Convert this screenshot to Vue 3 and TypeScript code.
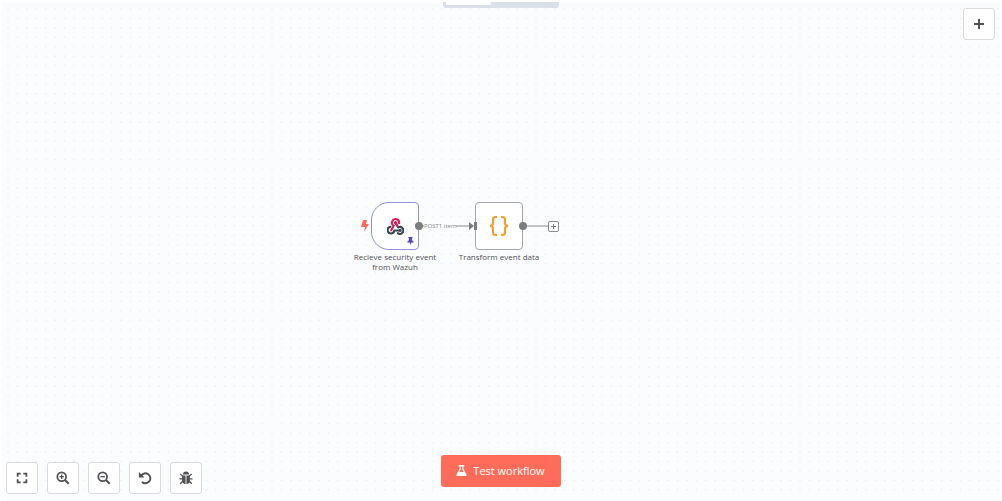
<script setup lang="ts">
interface Tool {
  name: string
  icon: 'fit' | 'in' | 'out' | 'reset' | 'debug'
}

const tools: Tool[] = [
  { name: 'Zoom to fit', icon: 'fit' },
  { name: 'Zoom in', icon: 'in' },
  { name: 'Zoom out', icon: 'out' },
  { name: 'Reset zoom', icon: 'reset' },
  { name: 'Report bug', icon: 'debug' },
]

// Seven by seven dots in each tile of the canvas grid
const steps = [0, 1, 2, 3, 4, 5, 6]
const tile = 66
const dots = steps.flatMap((r) =>
  steps.map((c) => ({ x: 8 + (c * tile) / 7, y: 9 + (r * tile) / 7 })),
)
</script>

<template>
  <main class="editor">
    <svg class="grid" aria-hidden="true">
      <defs>
        <pattern id="dots" :width="tile" :height="tile" patternUnits="userSpaceOnUse">
          <circle v-for="(d, i) in dots" :key="i" :cx="d.x" :cy="d.y" r="0.8" fill="#eaecf0" />
        </pattern>
      </defs>
      <rect width="100%" height="100%" fill="url(#dots)" />
    </svg>

    <div class="tabs"><span class="tab"></span></div>

    <button class="square add" type="button" aria-label="Add node">
      <svg viewBox="0 0 16 16"><path d="M8 3v10M3 8h10" stroke="currentColor" stroke-width="2" /></svg>
    </button>

    <svg class="wires" viewBox="0 0 210 60" aria-hidden="true">
      <path d="M59 30H111M163 30H189" stroke="#8b8c90" stroke-width="1" />
      <path d="M109 26l5 4-5 4z" fill="#7b7c80" />
    </svg>

    <svg class="bolt" viewBox="0 0 8 12" aria-hidden="true">
      <path d="M2 0h4L5 4h3L3 12l1-5H0z" fill="#ff6d5a" />
    </svg>

    <section class="node trigger">
      <div class="box">
        <svg class="webhook" viewBox="0 0 18 18" fill="none" stroke-width="2.200" stroke-linecap="round">
          <path d="M3.600 9.300A3.600 3.600 0 1 0 7.800 13.200H13.500" stroke="#37474f" />
          <path d="M9 5l3 5A3.600 3.600 0 1 1 11.500 16" stroke="#37474f" />
          <path d="M12.800 5.500A3.800 3.800 0 1 0 7 8.200L4.500 13M9 5l2 3.500" stroke="#e0195f" />
          <circle cx="9" cy="5" r="0.600" stroke="#e0195f" />
          <circle cx="14" cy="13.200" r="0.600" stroke="#37474f" />
        </svg>
        <svg class="pin" viewBox="0 0 8 10"><path d="M1 0h6v1H6v3l2 2v1H5L4 10 3 7H0V6l2-2V1H1z" fill="#5146c8" /></svg>
      </div>
      <span class="port out"></span>
      <p class="label">Recieve security event from Wazuh</p>
    </section>

    <span class="edge-label">POST1 item</span>

    <section class="node code">
      <div class="box">
        <svg class="braces" viewBox="0 0 20 20" fill="none" stroke="#ff9922" stroke-width="2">
          <path d="M8 1H6.500Q4 1 4 3.500V7Q4 10 1 10Q4 10 4 13V16.500Q4 19 6.500 19H8M12 1H13.500Q16 1 16 3.500V7Q16 10 19 10Q16 10 16 13V16.500Q16 19 13.500 19H12" />
        </svg>
      </div>
      <span class="port in"></span>
      <span class="port out"></span>
      <p class="label">Transform event data</p>
    </section>

    <button class="plus" type="button" aria-label="Add next node">
      <svg viewBox="0 0 9 9"><path d="M4.500 2v5M2 4.500h5" stroke="#77787c" /></svg>
    </button>

    <nav class="tools" aria-label="Canvas controls">
      <button v-for="t in tools" :key="t.name" class="square" type="button" :aria-label="t.name">
        <svg viewBox="0 0 16 16" fill="none" stroke="currentColor" stroke-width="2">
          <path v-if="t.icon === 'fit'" d="M3 6.500V3h3.500M9.500 3H13v3.500M13 9.500V13H9.500M6.500 13H3V9.500" />
          <template v-else-if="t.icon === 'in' || t.icon === 'out'">
            <circle cx="6.500" cy="6.500" r="5" />
            <path d="M10.500 10.500l4 4" stroke-width="2.500" />
            <path d="M4 6.500h5" stroke-width="1.500" />
            <path v-if="t.icon === 'in'" d="M6.500 4v5" stroke-width="1.500" />
          </template>
          <template v-else-if="t.icon === 'reset'">
            <path d="M3.500 5.500A5.700 5.700 0 1 1 4.500 12.500" stroke-width="2.200" />
            <path d="M1 1v6.500h6.500z" fill="currentColor" stroke="none" />
          </template>
          <template v-else>
            <path d="M4.500 4a3.500 3.500 0 0 1 7 0zM3.500 5h4v10Q3.500 14.500 3.500 10.500zM12.500 5h-4v10Q12.500 14.500 12.500 10.500z" fill="currentColor" stroke="none" />
            <path d="M1.500 3.500l3 2.500M14.500 3.500l-3 2.500M.5 9h4M15.500 9h-4M1.500 14.500l3-3M14.500 14.500l-3-3" stroke-width="1.500" />
          </template>
        </svg>
      </button>
    </nav>

    <button class="run" type="button">
      <svg viewBox="0 0 12 12" aria-hidden="true">
        <path d="M3 0h6v1.500H8V4l3.500 6.500Q12 12 10.500 12h-9Q0 12 .5 10.500L4 4V1.500H3zM5.200 1.500v3L3.700 7.500h4.600L6.800 4.500v-3z" fill="#fff" fill-rule="evenodd" />
      </svg>
      Test workflow
    </button>
  </main>
</template>

<style>
body {
  margin: 0;
  background: #fff;
}
</style>

<style scoped>
.editor {
  position: relative;
  box-sizing: border-box;
  height: 100vh;
  overflow: hidden;
  border: solid #fff;
  border-width: 2px 1px 0 2px;
  background: #fbfcfe;
  background-clip: padding-box;
  font-family: "Open Sans", "Noto Sans", sans-serif;
  color: #525356;
}
button {
  display: flex;
  align-items: center;
  justify-content: center;
  box-sizing: border-box;
  margin: 0;
  padding: 0;
  font: inherit;
  cursor: pointer;
}
svg {
  display: block;
}
.grid {
  position: absolute;
  top: -2px;
  left: -2px;
  width: 100%;
  height: 100%;
}
.tabs {
  position: absolute;
  top: 0;
  left: 50%;
  box-sizing: border-box;
  width: 116px;
  height: 6px;
  margin-left: -59px;
  padding: 0 3px 3px;
  border-radius: 0 0 3px 3px;
  background: #dadfe9;
}
.tab {
  display: block;
  width: 45px;
  height: 3px;
  border-radius: 0 0 2px 2px;
  background: #fff;
}
.square {
  width: 32px;
  height: 32px;
  border: 1px solid #d9dbe1;
  border-radius: 3px;
  background: #fff;
  color: #525356;
}
.square svg {
  width: 14px;
  height: 14px;
}
.add {
  position: absolute;
  top: 6px;
  right: 6px;
}
.add svg {
  width: 16px;
  height: 16px;
}
.tools {
  position: absolute;
  bottom: 7px;
  left: 4px;
  display: flex;
  gap: 9px;
}
.run {
  position: absolute;
  bottom: 14px;
  left: 50%;
  gap: 6px;
  width: 120px;
  height: 32px;
  margin-left: -61px;
  padding-bottom: 2px;
  border: 0;
  border-radius: 3px;
  background: #ff6d5a;
  color: #fff;
  font-size: 11px;
  font-weight: 500;
}
.run svg {
  width: 11px;
  height: 11px;
}
.wires {
  position: absolute;
  top: 194px;
  left: 358px;
  width: 210px;
  height: 60px;
}
.bolt {
  position: absolute;
  top: 218px;
  left: 359px;
  width: 8px;
  height: 12px;
}
.node {
  position: absolute;
  top: 200px;
  width: 48px;
}
.trigger {
  left: 369px;
}
.code {
  left: 473px;
}
.box {
  position: relative;
  display: flex;
  align-items: center;
  justify-content: center;
  box-sizing: border-box;
  height: 48px;
  border: 1px solid #a5a6aa;
  border-radius: 4px;
  background: #fff;
}
.trigger .box {
  border-color: #968fe0;
  border-radius: 18px 4px 4px 18px;
}
.webhook {
  width: 17px;
  height: 17px;
}
.braces {
  width: 20px;
  height: 20px;
}
.pin {
  position: absolute;
  right: 4px;
  bottom: 4px;
  width: 7px;
  height: 8px;
}
.port {
  position: absolute;
  background: #7b7c80;
}
.out {
  top: 20px;
  right: -4px;
  width: 8px;
  height: 8px;
  border-radius: 50%;
}
.in {
  top: 20px;
  left: -1px;
  width: 3px;
  height: 8px;
}
.label {
  width: 92px;
  margin: 2px -22px 0;
  font-size: 8px;
  font-weight: 500;
  line-height: 10px;
  text-align: center;
}
.edge-label {
  position: absolute;
  top: 220px;
  left: 422px;
  background: #fbfcfe;
  color: #85868a;
  font-size: 6px;
  line-height: 8px;
}
.plus {
  position: absolute;
  top: 219px;
  left: 546px;
  width: 11px;
  height: 11px;
  border: 1px solid #8b8c90;
  border-radius: 2px;
  background: #fff;
}
.plus svg {
  width: 9px;
  height: 9px;
}
</style>
